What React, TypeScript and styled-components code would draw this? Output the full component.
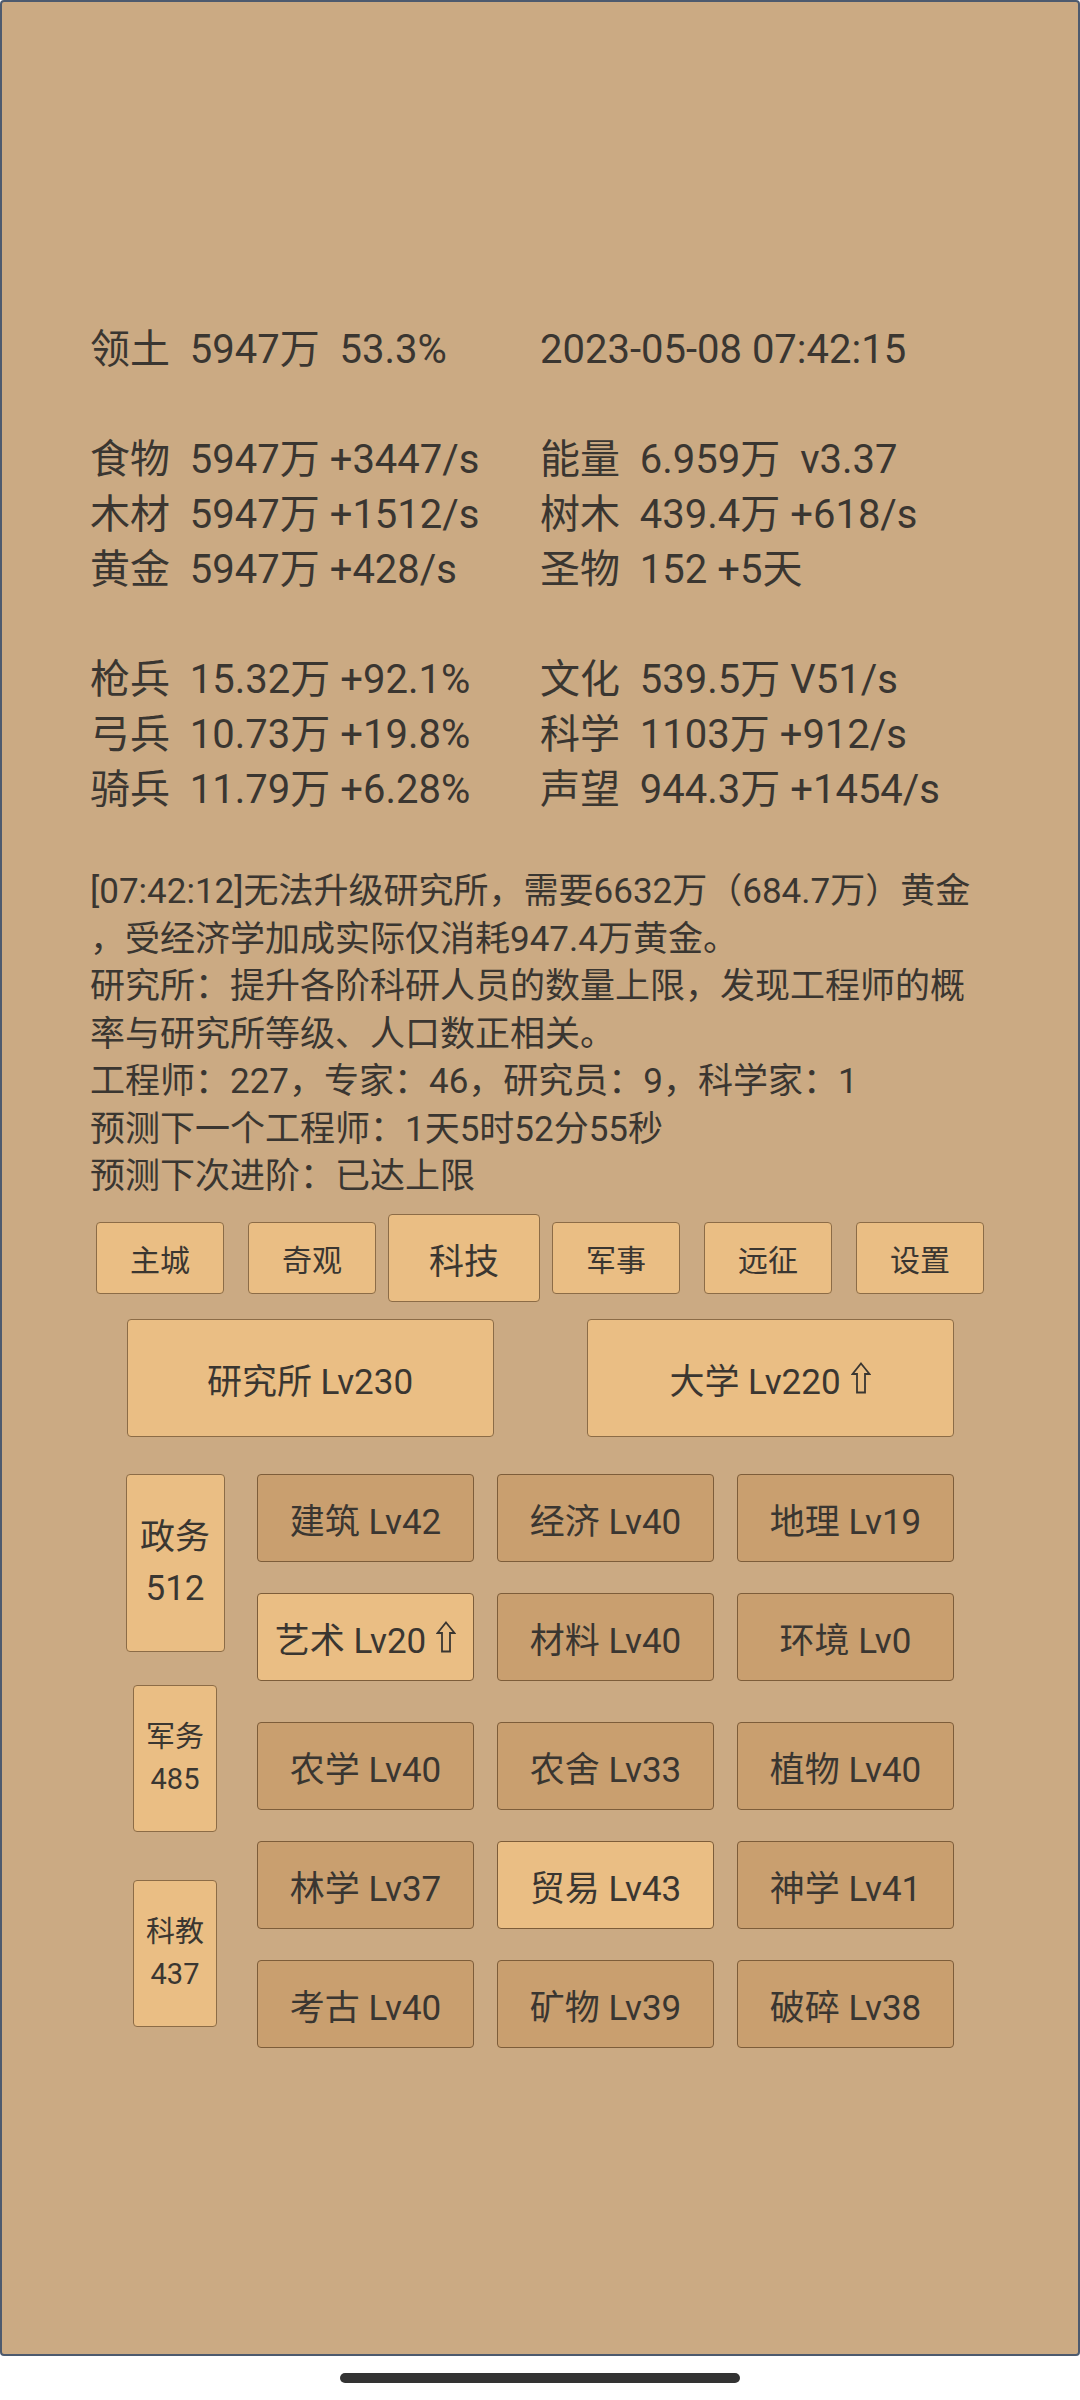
import styled, { createGlobalStyle } from "styled-components";

const GlobalStyle = createGlobalStyle`
  body {
    margin: 0;
    background: #ffffff;
    font-family: "Roboto", "Noto Sans CJK SC", sans-serif;
    color: #3a3631;
  }
`;

const Screen = styled.div`
  width: 1080px;
`;

const Panel = styled.div`
  box-sizing: border-box;
  width: 1080px;
  height: 2356px;
  border: 2px solid #4d5a6e;
  border-radius: 4px;
  background: #cbaa83;
  padding-top: 320px;
`;

const Stats = styled.div`
  padding-left: 88px;
  display: grid;
  grid-template-columns: 450px 1fr;
  font-size: 40px;
  line-height: 55px;
  white-space: pre;
`;

const BlankLine = styled.div`
  grid-column: 1 / 3;
  height: 55px;
`;

const Log = styled.div`
  margin-top: 51px;
  padding-left: 88px;
  font-size: 35px;
  line-height: 47.5px;
  white-space: nowrap;
`;

const TabRow = styled.div`
  margin-top: 13.5px;
  height: 88px;
  display: flex;
  justify-content: center;
`;

const Slot = styled.div<{ $w: number; $h: number }>`
  width: ${(p) => p.$w}px;
  height: ${(p) => p.$h}px;
  display: flex;
  align-items: center;
  justify-content: center;
`;

const Tab = styled.div<{ $active?: boolean }>`
  box-sizing: border-box;
  width: ${(p) => (p.$active ? 152 : 128)}px;
  height: ${(p) => (p.$active ? 88 : 72)}px;
  background: #eabe84;
  border: 1.5px solid #8c6c47;
  border-radius: 4px;
  display: flex;
  align-items: center;
  justify-content: center;
  font-size: ${(p) => (p.$active ? 35 : 30)}px;
`;

const BigRow = styled.div`
  margin-top: 17px;
  display: flex;
  justify-content: center;
`;

const BigButton = styled.div`
  box-sizing: border-box;
  width: 367px;
  height: 118px;
  background: #eabe84;
  border: 1.5px solid #8c6c47;
  border-radius: 4px;
  display: flex;
  align-items: center;
  justify-content: center;
  gap: 10px;
  font-size: 35px;
`;

const Lower = styled.div`
  margin-top: 28.5px;
  padding-left: 123px;
  display: flex;
`;

const SideColumn = styled.div`
  width: 100px;
  display: flex;
  flex-direction: column;
`;

const SideButton = styled.div<{ $active?: boolean }>`
  box-sizing: border-box;
  width: ${(p) => (p.$active ? 99 : 84)}px;
  height: ${(p) => (p.$active ? 178 : 147)}px;
  background: #eabe84;
  border: 1.5px solid #8c6c47;
  border-radius: 4px;
  display: flex;
  flex-direction: column;
  align-items: center;
  justify-content: center;
  text-align: center;
  font-size: ${(p) => (p.$active ? 35 : 29)}px;
  line-height: ${(p) => (p.$active ? 51 : 42)}px;
`;

const Groups = styled.div`
  margin-left: 32px;
  padding-top: 8.5px;
  display: flex;
  flex-direction: column;
  gap: 41px;
`;

const TechGrid = styled.div`
  display: grid;
  grid-template-columns: repeat(3, 217px);
  column-gap: 23px;
  row-gap: 31px;
`;

const TechButton = styled.div<{ $lit?: boolean }>`
  box-sizing: border-box;
  height: 88px;
  background: ${(p) => (p.$lit ? "#eabe84" : "#c99f6f")};
  border: 1.5px solid #7d5d3a;
  border-radius: 4px;
  display: flex;
  align-items: center;
  justify-content: center;
  gap: 10px;
  font-size: 35px;
  white-space: nowrap;
`;

const HomeArea = styled.div`
  height: 44px;
  display: flex;
  justify-content: center;
  padding-top: 17px;
  box-sizing: border-box;
`;

const HomeBar = styled.div`
  width: 400px;
  height: 10px;
  border-radius: 5px;
  background: #333333;
`;

const UpArrow = () => (
  <svg width="20" height="32" viewBox="0 0 20 32">
    <path
      d="M10 1.5 L18.5 12 L14 12 L14 30.5 L6 30.5 L6 12 L1.5 12 Z"
      fill="none"
      stroke="#3a3631"
      strokeWidth="1.8"
      strokeLinejoin="miter"
    />
  </svg>
);

const stats: ([string, string] | null)[] = [
  ["领土  5947万  53.3%", "2023-05-08 07:42:15"],
  null,
  ["食物  5947万 +3447/s", "能量  6.959万  v3.37"],
  ["木材  5947万 +1512/s", "树木  439.4万 +618/s"],
  ["黄金  5947万 +428/s", "圣物  152 +5天"],
  null,
  ["枪兵  15.32万 +92.1%", "文化  539.5万 V51/s"],
  ["弓兵  10.73万 +19.8%", "科学  1103万 +912/s"],
  ["骑兵  11.79万 +6.28%", "声望  944.3万 +1454/s"],
];

const logLines = [
  "[07:42:12]无法升级研究所，需要6632万（684.7万）黄金",
  "，受经济学加成实际仅消耗947.4万黄金。",
  "研究所：提升各阶科研人员的数量上限，发现工程师的概",
  "率与研究所等级、人口数正相关。",
  "工程师：227，专家：46，研究员：9，科学家：1",
  "预测下一个工程师：1天5时52分55秒",
  "预测下次进阶：已达上限",
];

const tabs = ["主城", "奇观", "科技", "军事", "远征", "设置"];

const sides = [
  { name: "政务", count: 512, active: true },
  { name: "军务", count: 485 },
  { name: "科教", count: 437 },
];

interface Tech {
  label: string;
  lit?: boolean;
  up?: boolean;
}

const groupA: Tech[] = [
  { label: "建筑 Lv42" },
  { label: "经济 Lv40" },
  { label: "地理 Lv19" },
  { label: "艺术 Lv20", lit: true, up: true },
  { label: "材料 Lv40" },
  { label: "环境 Lv0" },
];

const groupB: Tech[] = [
  { label: "农学 Lv40" },
  { label: "农舍 Lv33" },
  { label: "植物 Lv40" },
  { label: "林学 Lv37" },
  { label: "贸易 Lv43", lit: true },
  { label: "神学 Lv41" },
  { label: "考古 Lv40" },
  { label: "矿物 Lv39" },
  { label: "破碎 Lv38" },
];

const App = () => {
  return (
    <>
      <GlobalStyle />
      <Screen>
        <Panel>
          <Stats>
            {stats.map((row, i) =>
              row ? (
                <>
                  <div key={"l" + i}>{row[0]}</div>
                  <div key={"r" + i}>{row[1]}</div>
                </>
              ) : (
                <BlankLine key={"b" + i} />
              )
            )}
          </Stats>

          <Log>
            {logLines.map((line) => (
              <div key={line}>{line}</div>
            ))}
          </Log>

          <TabRow>
            {tabs.map((t) => (
              <Slot key={t} $w={152} $h={88}>
                <Tab $active={t === "科技"}>{t}</Tab>
              </Slot>
            ))}
          </TabRow>

          <BigRow>
            <Slot $w={460} $h={118}>
              <BigButton>研究所 Lv230</BigButton>
            </Slot>
            <Slot $w={460} $h={118}>
              <BigButton>
                大学 Lv220 <UpArrow />
              </BigButton>
            </Slot>
          </BigRow>

          <Lower>
            <SideColumn>
              {sides.map((s) => (
                <Slot key={s.name} $w={100} $h={195}>
                  <SideButton $active={s.active}>
                    <div>{s.name}</div>
                    <div>{s.count}</div>
                  </SideButton>
                </Slot>
              ))}
            </SideColumn>
            <Groups>
              {[groupA, groupB].map((group, gi) => (
                <TechGrid key={gi}>
                  {group.map((t) => (
                    <TechButton key={t.label} $lit={t.lit}>
                      {t.label}
                      {t.up && <UpArrow />}
                    </TechButton>
                  ))}
                </TechGrid>
              ))}
            </Groups>
          </Lower>
        </Panel>
        <HomeArea>
          <HomeBar />
        </HomeArea>
      </Screen>
    </>
  );
};

export default App;
